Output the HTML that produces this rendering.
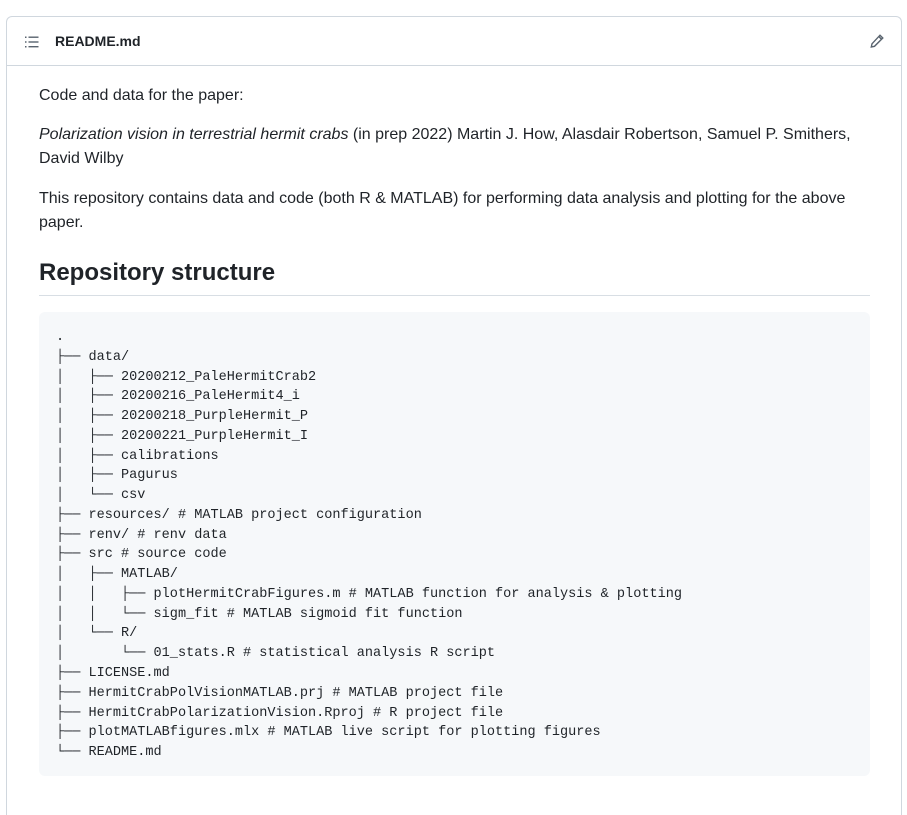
<!DOCTYPE html>
<html><head><style>
html,body{margin:0;background:#fff;font-family:"Liberation Sans",sans-serif;color:#1f2328;overflow:hidden;height:814px;}
.card{position:absolute;left:6px;top:16px;width:894px;height:798px;border:1px solid #d0d7de;border-bottom:none;border-radius:6px 6px 0 0;}
.hdr{height:48px;border-bottom:1px solid #d0d7de;position:relative;}
.hdr .t{position:absolute;left:48px;top:16px;font-weight:bold;font-size:14px;}
.c{position:absolute;left:32px;width:831px;}
p{margin:0;font-size:16px;line-height:24px;}
h2{margin:0;font-size:24px;font-weight:bold;line-height:30px;}
pre{margin:0;background:#f6f8fa;border-radius:6px;font-family:"Liberation Mono",monospace;font-size:13.55px;line-height:19.76px;padding:16px 18px 16px 17px;color:#1f2328;height:432px;}
</style></head><body>
<div class="card">
<div class="hdr">
<svg style="position:absolute;left:17px;top:17px" width="16" height="16" viewBox="0 0 16 16" fill="#59636e"><rect x="1" y="2.5" width="1.5" height="1.5"/><rect x="1" y="7.25" width="1.5" height="1.5"/><rect x="1" y="12" width="1.5" height="1.5"/><rect x="4.5" y="2.5" width="10" height="1.4"/><rect x="4.5" y="7.3" width="10" height="1.4"/><rect x="4.5" y="12" width="10" height="1.4"/></svg>
<div class="t">README.md</div>
<svg style="position:absolute;left:862px;top:16px" width="16" height="16" viewBox="0 0 16 16" fill="none" stroke="#59636e" stroke-width="1.4"><path d="M11 2.2l2.8 2.8L5.5 13.3 2.3 14l.7-3.2z M9.8 3.5l2.7 2.7"/></svg>
</div>
<div class="c" style="top:67px"><p>Code and data for the paper:</p></div>
<div class="c" style="top:106px"><p><i>Polarization vision in terrestrial hermit crabs</i> (in prep 2022) Martin J. How, Alasdair Robertson, Samuel P. Smithers, David Wilby</p></div>
<div class="c" style="top:170px"><p>This repository contains data and code (both R &amp; MATLAB) for performing data analysis and plotting for the above paper.</p></div>
<div class="c" style="top:241px;border-bottom:1px solid #d8dee4;height:37px"><h2>Repository structure</h2></div>
<div class="c" style="top:295px"><pre>.
├── data/
│   ├── 20200212_PaleHermitCrab2
│   ├── 20200216_PaleHermit4_i
│   ├── 20200218_PurpleHermit_P
│   ├── 20200221_PurpleHermit_I
│   ├── calibrations
│   ├── Pagurus
│   └── csv
├── resources/ # MATLAB project configuration
├── renv/ # renv data
├── src # source code
│   ├── MATLAB/
│   │   ├── plotHermitCrabFigures.m # MATLAB function for analysis &amp; plotting
│   │   └── sigm_fit # MATLAB sigmoid fit function
│   └── R/
│       └── 01_stats.R # statistical analysis R script
├── LICENSE.md
├── HermitCrabPolVisionMATLAB.prj # MATLAB project file
├── HermitCrabPolarizationVision.Rproj # R project file
├── plotMATLABfigures.mlx # MATLAB live script for plotting figures
└── README.md</pre></div>
</div>
</body></html>
